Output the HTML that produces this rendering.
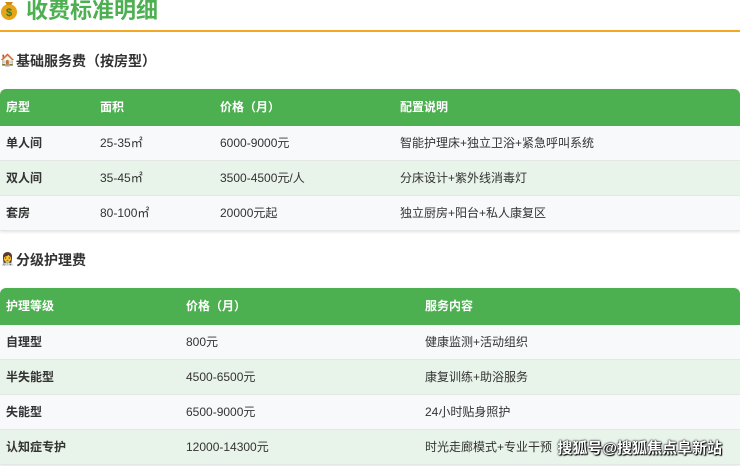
<!DOCTYPE html>
<html><head><meta charset="utf-8"><style>
*{margin:0;padding:0;box-sizing:border-box}
body{width:740px;height:466px;overflow:hidden;background:#fff;font-family:"Liberation Sans","Noto Sans CJK SC",sans-serif;position:relative;color:#333}
.a{position:absolute;white-space:nowrap}
.title{left:26px;top:-4px;font-size:22px;font-weight:bold;color:#4caf50;line-height:30px}
.line{left:0;top:30px;width:740px;height:2px;background:#f5a623}
.h{font-size:14px;font-weight:bold;color:#333;line-height:20px}
.tb{position:absolute;left:0;width:740px;border-radius:6px 6px 0 0;overflow:hidden;box-shadow:0 1px 3px rgba(0,0,0,.12)}
.r{position:relative;height:35px;font-size:12px;line-height:35px;border-bottom:1px solid #e4e8e4}
.r span{position:absolute;top:0}
.hd{background:#4caf50;color:#fff;font-weight:bold;height:37px;line-height:37px;border:none}
.o{background:#f8f9fb}.e{background:#e8f3e9}
.r span:first-child{font-weight:bold}
.wm{right:18px;top:437px;font-size:15px;color:#fff;font-weight:bold;text-shadow:0 0 2px #000,0 0 1px #000,1px 1px 1px #000}
</style></head><body>
<div class="a" style="left:0;top:0;width:18px;height:20px">
<svg width="18" height="20" viewBox="0 0 18 20"><ellipse cx="9" cy="12" rx="8" ry="8" fill="#e8a317"/><path d="M5 2 L13 2 L11 5 L7 5Z" fill="#d08b10"/><text x="9" y="16" font-size="11" text-anchor="middle" fill="#2e7d32" font-weight="bold" font-family="Liberation Sans">$</text></svg></div>
<div class="a title">收费标准明细</div>
<div class="a line"></div>
<div class="a" style="left:0;top:53px;font-size:12px">🏠</div>
<div class="a h" style="left:16px;top:51px">基础服务费（按房型）</div>
<div class="tb" style="top:89px">
<div class="r hd"><span style="left:6px">房型</span><span style="left:100px">面积</span><span style="left:220px">价格（月）</span><span style="left:400px">配置说明</span></div>
<div class="r o"><span style="left:6px">单人间</span><span style="left:100px">25-35㎡</span><span style="left:220px">6000-9000元</span><span style="left:400px">智能护理床+独立卫浴+紧急呼叫系统</span></div>
<div class="r e"><span style="left:6px">双人间</span><span style="left:100px">35-45㎡</span><span style="left:220px">3500-4500元/人</span><span style="left:400px">分床设计+紫外线消毒灯</span></div>
<div class="r o"><span style="left:6px">套房</span><span style="left:100px">80-100㎡</span><span style="left:220px">20000元起</span><span style="left:400px">独立厨房+阳台+私人康复区</span></div>
</div>
<div class="a" style="left:0;top:252px;font-size:12px">👩‍⚕️</div>
<div class="a h" style="left:16px;top:250px">分级护理费</div>
<div class="tb" style="top:288px">
<div class="r hd"><span style="left:6px">护理等级</span><span style="left:186px">价格（月）</span><span style="left:425px">服务内容</span></div>
<div class="r o"><span style="left:6px">自理型</span><span style="left:186px">800元</span><span style="left:425px">健康监测+活动组织</span></div>
<div class="r e"><span style="left:6px">半失能型</span><span style="left:186px">4500-6500元</span><span style="left:425px">康复训练+助浴服务</span></div>
<div class="r o"><span style="left:6px">失能型</span><span style="left:186px">6500-9000元</span><span style="left:425px">24小时贴身照护</span></div>
<div class="r e"><span style="left:6px">认知症专护</span><span style="left:186px">12000-14300元</span><span style="left:425px">时光走廊模式+专业干预</span></div>
</div>
<div class="a wm">搜狐号@搜狐焦点阜新站</div>
</body></html>
